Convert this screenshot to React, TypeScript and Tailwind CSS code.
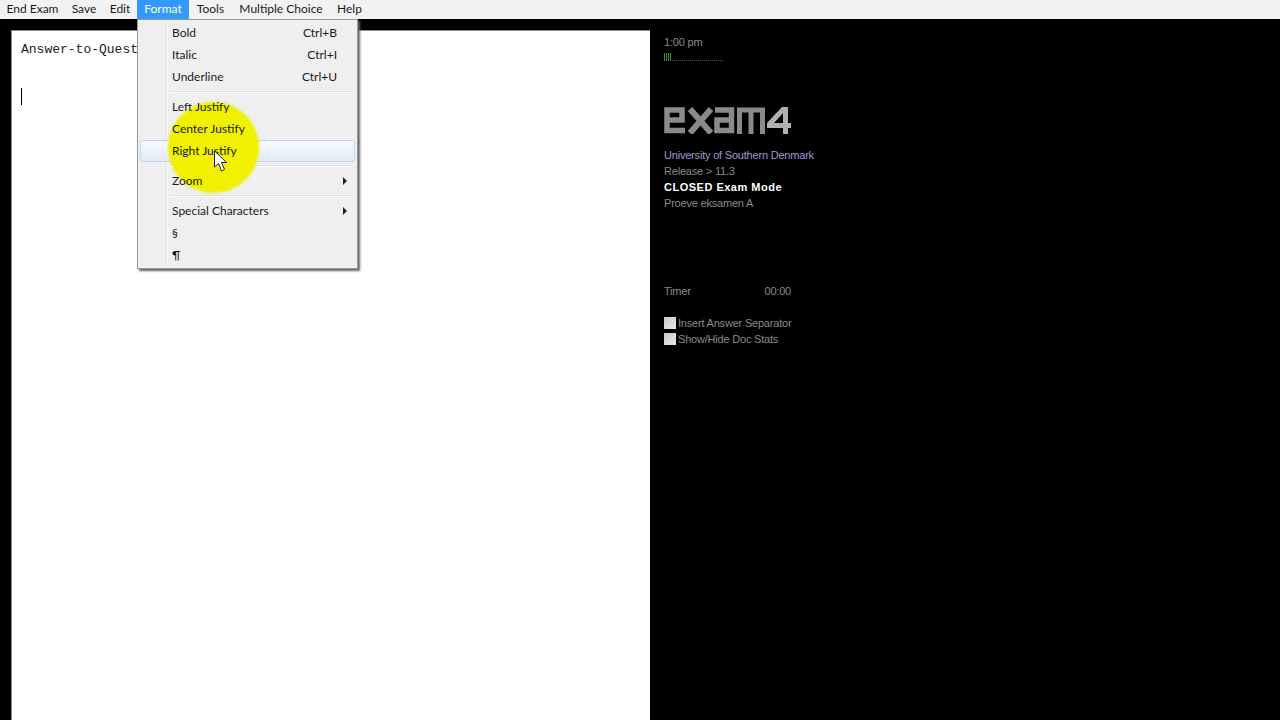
import { ReactNode } from "react";

const menus = [
  { label: "End Exam", width: "w-[65px]" },
  { label: "Save", width: "w-[38px]" },
  { label: "Edit", width: "w-[34px]" },
  { label: "Format", width: "w-[52px]" },
  { label: "Tools", width: "w-[43px]" },
  { label: "Multiple Choice", width: "w-[98px]" },
  { label: "Help", width: "w-[39px]" },
];

function Item({ label, shortcut, arrow, active }: { label: ReactNode; shortcut?: string; arrow?: boolean; active?: boolean }) {
  return (
    <div className={active ? "relative flex h-[22px] items-center justify-between rounded-[3px] border border-[#c3d6ea] bg-gradient-to-b from-[#f6f9fd] to-[#e2ebf6] pl-[31px] pr-[17px]" : "relative flex h-[22px] items-center justify-between border border-transparent pl-[31px] pr-[17px]"}>
      <span className="relative z-20">{label}</span>
      {shortcut && <span className="relative z-20">{shortcut}</span>}
      {arrow && <span className="mr-[-10px] h-0 w-0 border-y-[4px] border-l-[4px] border-y-transparent border-l-[#222]" />}
    </div>
  );
}

function Rule() {
  return <div className="my-[3px] ml-[30px] mr-[3px] h-[2px] border-t border-[#e0e0e0] bg-white" />;
}

function FormatMenu() {
  return (
    <div className="absolute left-[137px] top-[19px] z-10 h-[250px] w-[221px] border border-[#979797] bg-[#efefef] px-[2px] pt-[1px] font-['Lato',sans-serif] text-[12px] text-[#1a1a1a] shadow-[2px_2px_2px_#666]">
      <div className="absolute bottom-[2px] left-[28px] top-[2px] w-[2px] border-l border-[#e6e6e6] bg-[#f8f8f8]" />
      <div className="relative pt-[1px]">
        <Item label="Bold" shortcut="Ctrl+B" />
        <Item label="Italic" shortcut="Ctrl+I" />
        <Item label="Underline" shortcut="Ctrl+U" />
        <Rule />
        <Item label="Left Justify" />
        <Item label="Center Justify" />
        <Item label="Right Justify" active />
        <Rule />
        <Item label="Zoom" arrow />
        <Rule />
        <Item label="Special Characters" arrow />
        <Item label="§" />
        <Item label="¶" />
      </div>
      {/* cursor highlight */}
      <div className="pointer-events-none absolute left-[30px] top-[82px] z-10 h-[91px] w-[91px] rounded-full bg-[#f0f000] blur-[1px]" />
      <svg className="absolute left-[75px] top-[130px] z-30" width="16" height="23" viewBox="0 0 16 23">
        <path d="M1.5 1 L1.5 17 L5.5 13.5 L8.5 21 L11.5 19.5 L8.5 12.5 L13.5 12.5 Z" fill="#fff" stroke="#222" strokeWidth="1" />
      </svg>
    </div>
  );
}

function Logo() {
  return (
    <svg width="128" height="27" viewBox="0 0 128 27" className="block">
      <g fill="none" stroke="#8a8a8a" strokeWidth="5.5">
        <path d="M21 23.5 H3 V3 H18 V13 H3" />
        <path d="M26 2 L47 26 M47 2 L26 26" strokeWidth="6" />
        <path d="M51 3 H67.5 V23.5 H53 V13 H67.5" />
        <path d="M75.5 27 V3 H98.5 V27 M87 3 V27" strokeWidth="5" />
      </g>
      <path d="M118 0 L103 16 V21 H119 V27 H124 V21 H127 V16 H124 V0 Z M119 6 V16 H110 Z" fill="#b0b0b0" fillRule="evenodd" />
    </svg>
  );
}

export default function App() {
  return (
    <div className="relative flex h-[720px] w-[1280px] flex-col overflow-hidden bg-black font-['Liberation_Sans',sans-serif]">
      <div className="flex h-[19px] shrink-0 items-center bg-[#f2f2f2] font-['Lato',sans-serif] text-[12px] text-[#1a1a1a]">
        {menus.map((m) => (
          <div key={m.label} className={m.label === "Format" ? `flex h-full items-center justify-center bg-[#3399ff] pb-[1px] text-white ${m.width}` : `flex h-full items-center justify-center pb-[1px] ${m.width}`}>
            {m.label}
          </div>
        ))}
      </div>
      <div className="flex min-h-0 flex-1">
        <div className="ml-[11px] mt-[11px] w-[639px] border-l border-t border-[#8a8a8a] bg-white pl-[9px] pt-[11px] font-['Liberation_Mono',monospace] text-[13px] text-[#222]">
          <div className="leading-[15px]">Answer-to-Question</div>
          <div className="mt-[31px] h-[17px] w-[1px] bg-black" />
        </div>
        <div className="flex-1 pl-[14px] pt-[16px] text-[11px] tracking-[-0.2px] text-[#8a8a8a]">
          <div className="leading-[14px]">1:00 pm</div>
          <div className="mt-[4px] flex h-[9px] items-start gap-[1px]">
            {[0, 1, 2, 3].map((i) => <div key={i} className="h-[8px] w-[1px] bg-[#3f8a3f]" />)}
          </div>
          <div className="mt-[-2px] h-0 w-[59px] border-t border-dotted border-[#4a4a4a]" />
          <div className="mt-[46px]"><Logo /></div>
          <div className="mt-[13px] leading-[16px] text-[#9a9ad8]">University of Southern Denmark</div>
          <div className="leading-[16px]">Release &gt; 11.3</div>
          <div className="font-bold leading-[16px] tracking-[0.5px] text-white">CLOSED Exam Mode</div>
          <div className="leading-[16px]">Proeve eksamen A</div>
          <div className="mt-[72px] flex w-[127px] justify-between leading-[16px]">
            <span>Timer</span>
            <span>00:00</span>
          </div>
          <div className="mt-[16px] flex flex-col">
            {["Insert Answer Separator", "Show/Hide Doc Stats"].map((t) => (
              <div key={t} className="flex h-[16px] items-center gap-[2px]">
                <div className="h-[12px] w-[12px] bg-gradient-to-br from-[#c8c8c8] to-[#e8e8e8]" />
                <span>{t}</span>
              </div>
            ))}
          </div>
        </div>
      </div>
      <FormatMenu />
    </div>
  );
}
